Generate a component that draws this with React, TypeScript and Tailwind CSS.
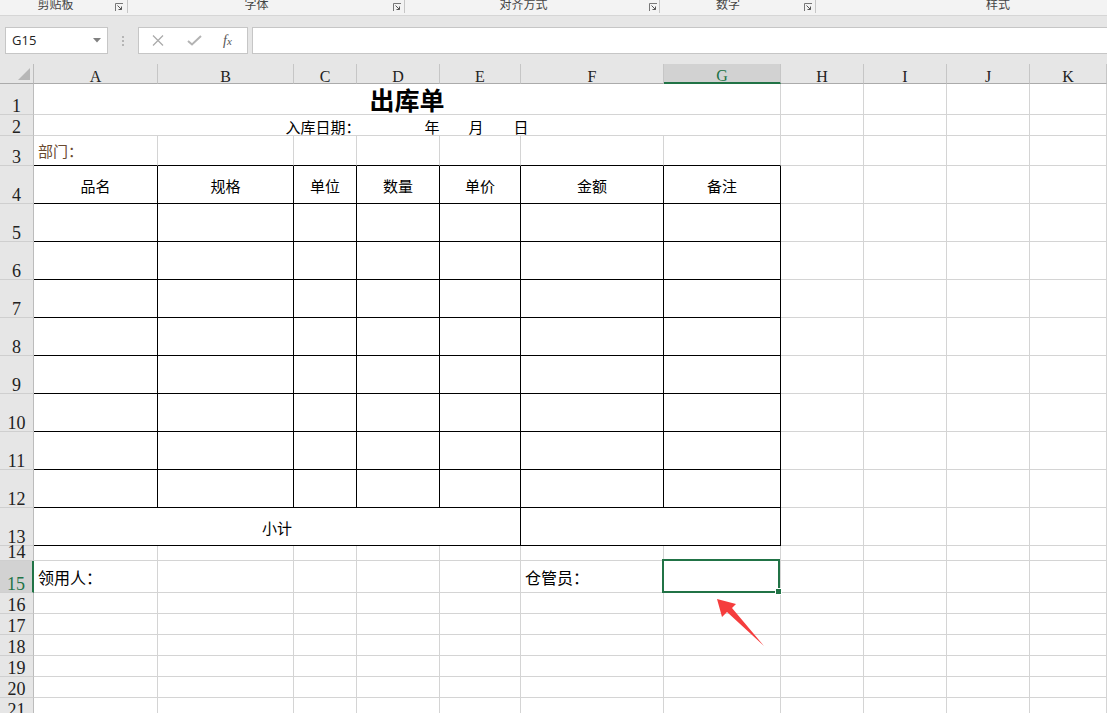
import React from "react";

const LETTERS = ["A", "B", "C", "D", "E", "F", "G", "H", "I", "J", "K"];
const GRIDLINE = "border-r border-b border-[#d4d4d4]";
const INKLINE = "border-r border-b border-black";
const TOPINK = "border-r border-b border-r-[#d4d4d4] border-b-black";
const CJK = "font-['Noto_Sans_CJK_SC',sans-serif] text-black";

function RowHead({ n, active = false }: { n: number; active?: boolean }) {
  return (
    <div
      className={`flex items-end justify-center border-b border-b-[#cfcfcf] font-['Liberation_Serif',serif] text-[18px] leading-[16px] ${
        active
          ? "border-r-2 border-r-[#217346] bg-[#d2d2d2] text-[#217346]"
          : "border-r border-r-[#bcbcbc] bg-[#e6e6e6] text-[#222]"
      }`}
    >
      {n}
    </div>
  );
}

function ColHead({ letter, active = false }: { letter: string; active?: boolean }) {
  return (
    <div
      className={`flex items-end justify-center border-r border-r-[#c6c6c6] font-['Liberation_Serif',serif] text-[16px] leading-[13px] ${
        active
          ? "border-b-2 border-b-[#217346] bg-[#d2d2d2] text-[#217346]"
          : "border-b border-b-[#ababab] bg-[#e6e6e6] text-[#222]"
      }`}
    >
      {letter}
    </div>
  );
}

function Blanks({ count }: { count: number }) {
  return (
    <>
      {Array.from({ length: count }).map((_, i) => (
        <div key={i} className={GRIDLINE} />
      ))}
    </>
  );
}

function Launcher() {
  return (
    <svg width="8" height="8" viewBox="0 0 8 8" className="mt-[3px] shrink-0">
      <path d="M0.5 8V0.5H8" stroke="#777" strokeWidth="1" fill="none" />
      <path d="M2.5 2.5L6.5 6.5M6.5 3.5V6.5H3.5" stroke="#555" strokeWidth="1" fill="none" />
    </svg>
  );
}

function Ribbon() {
  const label = "flex justify-center text-[12px] leading-[12px] mt-[-2px] text-[#444] font-['Noto_Sans_CJK_SC',sans-serif]";
  const sep = "h-[13px] w-px shrink-0 bg-[#c6c6c6]";
  return (
    <div className="flex h-[16px] overflow-hidden border-b border-[#d6d6d6] bg-[#f3f3f3]">
      <div className={`${label} w-[111px] shrink-0`}>剪贴板</div>
      <div className="ml-[4px]"><Launcher /></div>
      <div className={`${sep} ml-[4px]`} />
      <div className={`${label} w-[257px] shrink-0`}>字体</div>
      <div className="ml-[8px]"><Launcher /></div>
      <div className={`${sep} ml-[3px]`} />
      <div className={`${label} w-[237px] shrink-0`}>对齐方式</div>
      <div className="ml-[7px]"><Launcher /></div>
      <div className={`${sep} ml-[2px]`} />
      <div className={`${label} w-[136px] shrink-0`}>数字</div>
      <div className="ml-[8px]"><Launcher /></div>
      <div className={`${sep} ml-[3px]`} />
      <div className={`${label} w-[364px] shrink-0`}>样式</div>
    </div>
  );
}

function FormulaBar() {
  return (
    <div className="flex h-[48px] items-start bg-[#e6e6e6] pl-[5px] pt-[11px]">
      <div className="flex h-[27px] w-[103px] shrink-0 items-center justify-between border border-[#c6c6c6] bg-white pl-[6px] pr-[6px]">
        <span className="font-['Open_Sans',sans-serif] text-[13px] text-[#222]">G15</span>
        <svg width="8" height="5" viewBox="0 0 8 5">
          <path d="M0 0H8L4 4.5Z" fill="#808080" />
        </svg>
      </div>
      <div className="flex h-[27px] w-[30px] shrink-0 flex-col items-center justify-center gap-[2px]">
        <span className="h-[2px] w-[2px] bg-[#b5b5b5]" />
        <span className="h-[2px] w-[2px] bg-[#b5b5b5]" />
        <span className="h-[2px] w-[2px] bg-[#b5b5b5]" />
      </div>
      <div className="flex h-[27px] w-[110px] shrink-0 items-center border border-[#c6c6c6] bg-white">
        <svg width="12" height="11" viewBox="0 0 12 11" className="ml-[13px]">
          <path d="M1 0.5L11 10.5M11 0.5L1 10.5" stroke="#ababab" strokeWidth="1.3" />
        </svg>
        <svg width="15" height="11" viewBox="0 0 15 11" className="ml-[23px]">
          <path d="M1 6L5 9.5L14 1" stroke="#b3b3b3" strokeWidth="2" fill="none" />
        </svg>
        <span className="ml-[21px] font-['Liberation_Serif',serif] text-[14px] italic leading-[14px] text-[#555]">
          f<span className="text-[11px]">x</span>
        </span>
      </div>
      <div className="ml-[4px] h-[27px] flex-1 border-y border-l border-[#c6c6c6] bg-white" />
    </div>
  );
}

function Sheet() {
  const heads = ["品名", "规格", "单位", "数量", "单价", "金额", "备注"];
  return (
    <div className="grid grid-cols-[34px_124px_136px_63px_83px_81px_143px_117px_83px_83px_83px_77px] grid-rows-[20px_31px_21px_30px_38px_38px_38px_38px_38px_38px_38px_38px_38px_38px_15px_32px_21px_21px_21px_21px_21px_21px]">
      {/* column header row */}
      <div className="relative border-r border-b border-r-[#bcbcbc] border-b-[#ababab] bg-[#e6e6e6]">
        <svg width="34" height="20" viewBox="0 0 34 20" className="absolute left-0 top-0">
          <path d="M18 16L30 4V16Z" fill="#b7b7b7" />
        </svg>
      </div>
      {LETTERS.map((l) => (
        <ColHead key={l} letter={l} active={l === "G"} />
      ))}

      {/* 1 */}
      <RowHead n={1} />
      <div className={`${GRIDLINE} col-span-7 flex items-end justify-center pb-[2px]`}>
        <span className={`${CJK} text-[25px] font-bold leading-[25px]`}>出库单</span>
      </div>
      <Blanks count={4} />

      {/* 2 */}
      <RowHead n={2} />
      <div className={`${GRIDLINE} col-span-7 flex items-end justify-center pb-[1px] ${CJK} text-[15px] leading-[15px]`}>
        <span>入库日期：</span>
        <span className="ml-[64px]">年</span>
        <span className="ml-[29px]">月</span>
        <span className="ml-[30px]">日</span>
      </div>
      <Blanks count={4} />

      {/* 3 */}
      <RowHead n={3} />
      <div className={`${TOPINK} flex items-center pl-[4px] font-['Noto_Sans_CJK_SC',sans-serif] text-[15px] leading-[15px] text-[#6a4a30]`}>
        部门：
      </div>
      {Array.from({ length: 6 }).map((_, i) => (
        <div key={i} className={TOPINK} />
      ))}
      <Blanks count={4} />

      {/* 4 */}
      <RowHead n={4} />
      {heads.map((h) => (
        <div key={h} className={`${INKLINE} flex items-center justify-center pt-[2px] ${CJK} text-[15px] leading-[15px]`}>
          {h}
        </div>
      ))}
      <Blanks count={4} />

      {/* 5 - 12 */}
      {[5, 6, 7, 8, 9, 10, 11, 12].map((r) => (
        <React.Fragment key={r}>
          <RowHead n={r} />
          {Array.from({ length: 7 }).map((_, i) => (
            <div key={i} className={INKLINE} />
          ))}
          <Blanks count={4} />
        </React.Fragment>
      ))}

      {/* 13 */}
      <RowHead n={13} />
      <div className={`${INKLINE} col-span-5 flex items-center justify-center pt-[2px] ${CJK} text-[15px] leading-[15px]`}>
        小计
      </div>
      <div className={`${INKLINE} col-span-2`} />
      <Blanks count={4} />

      {/* 14 */}
      <RowHead n={14} />
      <Blanks count={11} />

      {/* 15 */}
      <RowHead n={15} active />
      <div className={`${GRIDLINE} flex items-center pl-[4px] ${CJK} text-[16px] leading-[16px]`}>领用人：</div>
      <Blanks count={4} />
      <div className={`${GRIDLINE} flex items-center pl-[4px] ${CJK} text-[16px] leading-[16px]`}>仓管员：</div>
      <div className={`${GRIDLINE} relative`}>
        <div className="absolute -left-[2px] -top-[2px] right-0 -bottom-[1px] border-2 border-[#217346]">
          <div className="absolute -bottom-[4px] -right-[4px] h-[7px] w-[7px] border border-white bg-[#217346]" />
        </div>
      </div>
      <Blanks count={4} />

      {/* 16 - 21 */}
      {[16, 17, 18, 19, 20, 21].map((r) => (
        <React.Fragment key={r}>
          <RowHead n={r} />
          <Blanks count={11} />
        </React.Fragment>
      ))}
    </div>
  );
}

export default function App() {
  return (
    <div className="relative h-[713px] w-[1107px] overflow-hidden bg-white">
      <Ribbon />
      <FormulaBar />
      <Sheet />
      <svg
        width="60"
        height="60"
        viewBox="0 0 60 60"
        className="absolute left-[710px] top-[592px]"
      >
        <path d="M7 7L26 12L22 16L54 54L17 20L12 25Z" fill="#f53d3d" />
      </svg>
    </div>
  );
}
